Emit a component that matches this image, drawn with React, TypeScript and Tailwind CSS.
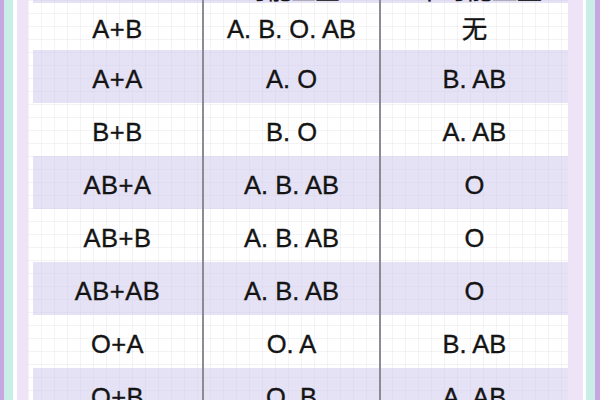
import React from "react";

const rows: [string, string, string][] = [
  ["A+B", "A. B. O. AB", "无"],
  ["A+A", "A. O", "B. AB"],
  ["B+B", "B. O", "A. AB"],
  ["AB+A", "A. B. AB", "O"],
  ["AB+B", "A. B. AB", "O"],
  ["AB+AB", "A. B. AB", "O"],
  ["O+A", "O. A", "B. AB"],
  ["O+B", "O. B", "A. AB"],
];

export default function App() {
  return (
    <div
      className="flex h-[400px] w-[600px] overflow-hidden bg-white text-[#141414] [-webkit-text-stroke:0.35px_#141414]"
      style={{ fontFamily: '"Liberation Sans", "Noto Sans CJK SC", Arial, sans-serif' }}
    >
      <div className="w-[4px] shrink-0 bg-[#c7a6e2]" />
      <div className="w-[9px] shrink-0 bg-[#c9eee8]" />
      <div className="w-[4px] shrink-0 bg-white" />
      <div className="w-[11px] shrink-0 bg-[#efe3f7]" />
      <div className="flex w-[540px] shrink-0 bg-white bg-[linear-gradient(to_right,rgba(60,60,90,0.06)_1px,transparent_1px),linear-gradient(to_bottom,rgba(60,60,90,0.06)_1px,transparent_1px)] bg-[size:13px_13px] pl-[5px]">
        <div className="flex w-[535px] flex-col">
          <div className="mt-[-47px] grid h-[50px] shrink-0 grid-cols-[169px_177px_189px] bg-[rgba(208,203,238,0.55)] text-[24px]">
            <div className="flex items-start justify-center">父母血型</div>
            <div className="flex items-end justify-center border-l-2 border-[#8b8b95] leading-none">
              <span className="mb-[2px]" style={{ fontFamily: '"Noto Sans CJK SC", sans-serif' }}>可能血型</span>
            </div>
            <div className="flex items-end justify-center border-l-2 border-[#8b8b95] leading-none">
              <span className="mb-[2px] ml-[10px] text-[25px]" style={{ fontFamily: '"Noto Sans CJK SC", sans-serif' }}>不可能血型</span>
            </div>
          </div>
          {rows.map((r, i) => (
            <div
              key={r[0]}
              className={
                "grid shrink-0 grid-cols-[169px_177px_189px] text-[25.5px] " +
                (i === 0 ? "h-[47px] " : "h-[53px] ") +
                (i % 2 === 1 ? "bg-[rgba(208,203,238,0.55)]" : "")
              }
            >
              <div className="flex items-center justify-center pt-[5px] tracking-[0.5px]">{r[0]}</div>
              <div className="flex items-center justify-center border-l-2 border-[#8b8b95] pt-[5px]">{r[1]}</div>
              <div className="flex items-center justify-center border-l-2 border-[#8b8b95] pt-[5px]">{r[2]}</div>
            </div>
          ))}
        </div>
      </div>
      <div className="w-[15px] shrink-0 bg-[#efe3f7]" />
      <div className="w-[3px] shrink-0 bg-white" />
      <div className="w-[9px] shrink-0 bg-[#c9eee8]" />
      <div className="w-[5px] shrink-0 bg-[#c7a6e2]" />
    </div>
  );
}
